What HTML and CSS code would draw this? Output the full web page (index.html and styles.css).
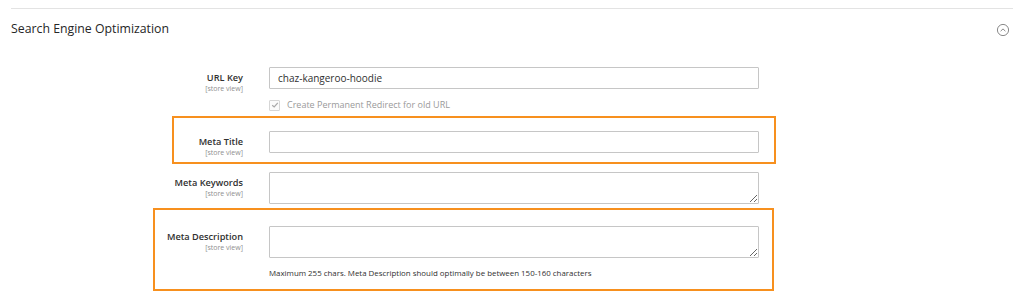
FILE: index.html
```html
<!DOCTYPE html>
<html>
<head>
<meta charset="utf-8">
<link rel="stylesheet" href="styles.css">
</head>
<body>
<section class="section">
  <div class="section-head">
    <h2 class="section-title">Search Engine Optimization</h2>
    <svg class="collapse-icon" width="14" height="14" viewBox="0 0 14 14">
      <circle cx="7" cy="7" r="5.6" fill="none" stroke="#8a8a8a" stroke-width="1"/>
      <path d="M4.6 8.2 L7 5.9 L9.4 8.2" fill="none" stroke="#8a8a8a" stroke-width="1"/>
    </svg>
  </div>

  <div class="field field-url">
    <div class="label"><span class="label-main">URL Key</span><span class="scope">[store view]</span></div>
    <div class="control">
      <input class="input" type="text" value="chaz-kangeroo-hoodie">
    </div>
  </div>

  <div class="field field-check">
    <div class="label label-empty"></div>
    <div class="control check-row">
      <span class="checkbox">
        <svg width="8" height="8" viewBox="0 0 8 8"><path d="M1.2 4.2 L3.2 6 L6.8 1.8" fill="none" stroke="#a8a8a8" stroke-width="1.2"/></svg>
      </span>
      <span class="check-text">Create Permanent Redirect for old URL</span>
    </div>
  </div>

  <div class="field field-title">
    <div class="highlight hl-title"></div>
    <div class="label"><span class="label-main">Meta Title</span><span class="scope">[store view]</span></div>
    <div class="control">
      <input class="input" type="text" value="">
    </div>
  </div>

  <div class="field field-keywords">
    <div class="label"><span class="label-main">Meta Keywords</span><span class="scope">[store view]</span></div>
    <div class="control">
      <textarea class="textarea"></textarea>
    </div>
  </div>

  <div class="field field-desc">
    <div class="highlight hl-desc"></div>
    <div class="label"><span class="label-main">Meta Description</span><span class="scope">[store view]</span></div>
    <div class="control">
      <textarea class="textarea"></textarea>
      <div class="note">Maximum 255 chars. Meta Description should optimally be between 150-160 characters</div>
    </div>
  </div>
</section>
</body>
</html>
```

FILE: styles.css
```css
html, body {
  margin: 0;
  padding: 0;
  background: #ffffff;
}

body {
  font-family: "Open Sans", "Liberation Sans", sans-serif;
  color: #303030;
  width: 1024px;
  height: 294px;
  overflow: hidden;
}

.section {
  margin: 8px 11px 0 11px;
  border-top: 1px solid #e3e3e3;
}

.section-head {
  display: flex;
  align-items: center;
  justify-content: space-between;
  height: 39px;
  padding-right: 3px;
}

.section-title {
  margin: 0;
  font-size: 12.3px;
  font-weight: 400;
  color: #262626;
}

.collapse-icon {
  display: block;
  margin-top: 2px;
}

.field {
  display: grid;
  grid-template-columns: 232px 490px;
  column-gap: 26px;
  align-items: start;
  position: relative;
}

.label {
  box-sizing: border-box;
  height: 22px;
  display: flex;
  flex-direction: column;
  align-items: flex-end;
  padding-top: 5px;
  text-align: right;
}

.label-empty {
  height: auto;
  padding: 0;
}

.label-main {
  font-size: 9.2px;
  font-weight: 600;
  color: #303030;
  line-height: 12px;
}

.scope {
  font-size: 7px;
  color: #8f8f8f;
  line-height: 9px;
}

.control {
  display: flex;
  flex-direction: column;
}

.input,
.textarea {
  box-sizing: border-box;
  width: 490px;
  margin: 0;
  border: 1px solid #c6c6c6;
  border-radius: 1px;
  background: #fff;
  font-family: "Open Sans", "Liberation Sans", sans-serif;
  font-size: 10px;
  color: #303030;
  outline: none;
}

.input {
  height: 22px;
  padding: 0 8px;
}

.textarea {
  height: 32px;
  padding: 4px 8px;
  resize: vertical;
  display: block;
}

.field-url {
  margin-top: 19px;
}

.field-check {
  margin-top: 10px;
}

.check-row {
  flex-direction: row;
  align-items: center;
  gap: 7px;
}

.checkbox {
  box-sizing: border-box;
  width: 11px;
  height: 11px;
  border: 1px solid #d6d6d6;
  border-radius: 1px;
  display: flex;
  align-items: center;
  justify-content: center;
  background: #fbfbfb;
}

.checkbox svg {
  display: block;
}

.check-text {
  font-size: 9px;
  color: #9a9a9a;
  line-height: 12px;
}

.field-title {
  margin-top: 20px;
}

.field-keywords {
  margin-top: 19px;
}

.field-desc {
  margin-top: 22px;
}

.note {
  margin-top: 10px;
  font-size: 7.9px;
  color: #303030;
  line-height: 11px;
}

.highlight {
  position: absolute;
  border: 2px solid #f7901e;
  box-sizing: border-box;
  pointer-events: none;
}

.hl-title {
  left: 161px;
  top: -15px;
  width: 604px;
  height: 48px;
}

.hl-desc {
  left: 142px;
  top: -18px;
  width: 621px;
  height: 83px;
}
```
